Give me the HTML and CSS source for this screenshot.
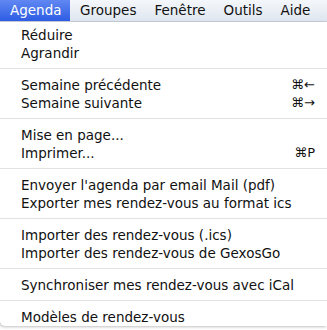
FILE: index.html
```html
<!DOCTYPE html>
<html lang="fr">
<head>
  <meta charset="UTF-8">
  <title>Agenda</title>
  <link rel="stylesheet" href="styles.css">
</head>
<body>
  <!-- Barre de menus -->
  <div class="menubar">
    <span class="title active">Agenda</span>
    <span class="title">Groupes</span>
    <span class="title">Fenêtre</span>
    <span class="title">Outils</span>
    <span class="title">Aide</span>
  </div>

  <!-- Menu déroulant -->
  <div class="menu">
    <div class="item">Réduire</div>
    <div class="item">Agrandir</div>
    <div class="sep"></div>
    <div class="item">Semaine précédente<span class="key">⌘←</span></div>
    <div class="item">Semaine suivante<span class="key">⌘→</span></div>
    <div class="sep"></div>
    <div class="item">Mise en page...</div>
    <div class="item">Imprimer...<span class="key">⌘P</span></div>
    <div class="sep"></div>
    <div class="item">Envoyer l'agenda par email Mail (pdf)</div>
    <div class="item">Exporter mes rendez-vous au format ics</div>
    <div class="sep"></div>
    <div class="item">Importer des rendez-vous (.ics)</div>
    <div class="item">Importer des rendez-vous de GexosGo</div>
    <div class="sep"></div>
    <div class="item">Synchroniser mes rendez-vous avec iCal</div>
    <div class="sep"></div>
    <div class="item">Modèles de rendez-vous</div>
  </div>
</body>
</html>
```

FILE: styles.css
```css
body {
  margin: 0;
  width: 327px;
  height: 330px;
  overflow: hidden;
  background: #ffffff;
  font-family: "DejaVu Sans", sans-serif;
  color: #111;
}
.menubar {
  display: flex;
  height: 22px;
  background: linear-gradient(#f4f7fb, #dfe6ef);
  border-bottom: 1px solid #c9d0da;
  box-sizing: border-box;
}
.title {
  font-size: 13.5px;
  line-height: 21px;
  padding: 0 9px;
  white-space: nowrap;
}
.title.active {
  background: linear-gradient(#6187f2, #2d5de3);
  color: #fff;
  width: 70px;
  box-sizing: border-box;
  padding: 0 0 0 10px;
  margin-right: 1px;
}
.menu {
  padding-top: 4px;
  background: #fff;
  border-bottom-left-radius: 5px;
  box-shadow: -1px 1px 3px rgba(0, 0, 0, 0.25);
}
.item {
  display: flex;
  justify-content: space-between;
  height: 18px;
  line-height: 18px;
  font-size: 13.5px;
  padding: 0 12px 0 21px;
}
.key {
  font-size: 13px;
}
.sep {
  height: 1px;
  background: #e2e2e2;
  margin: 6px 0 7px;
}
```
